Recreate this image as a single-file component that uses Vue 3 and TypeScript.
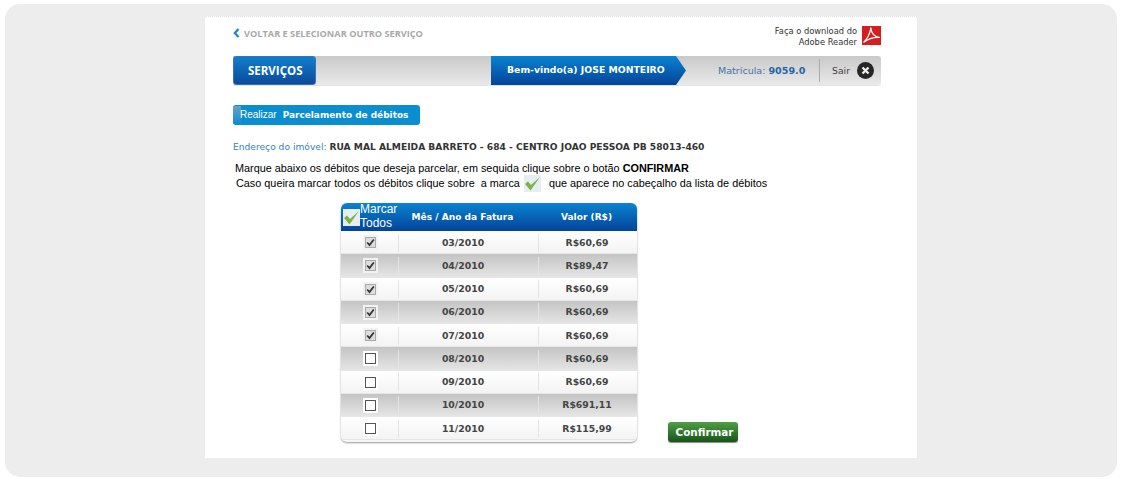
<script setup lang="ts">
interface Row { month: string; value: string; checked: boolean }
const rows: Row[] = [
  { month: '03/2010', value: 'R$60,69', checked: true },
  { month: '04/2010', value: 'R$89,47', checked: true },
  { month: '05/2010', value: 'R$60,69', checked: true },
  { month: '06/2010', value: 'R$60,69', checked: true },
  { month: '07/2010', value: 'R$60,69', checked: true },
  { month: '08/2010', value: 'R$60,69', checked: false },
  { month: '09/2010', value: 'R$60,69', checked: false },
  { month: '10/2010', value: 'R$691,11', checked: false },
  { month: '11/2010', value: 'R$115,99', checked: false },
]
</script>

<template>
  <div class="panel">
    <main class="sheet">
      <div class="top">
        <a class="back">
          <svg width="7" height="10" viewBox="0 0 7 10"><path d="M5.5 1 L1.8 5 L5.5 9" fill="none" stroke="#1a86c4" stroke-width="2.2" /></svg>
          VOLTAR E SELECIONAR OUTRO SERVIÇO
        </a>
        <div class="adobe">
          <span>Faça o download do<br />Adobe Reader</span>
          <svg width="19" height="19" viewBox="0 0 19 19">
            <rect width="19" height="19" fill="#d3201f" />
            <path d="M1.5 16.5 C5 13.5 8.5 7 8.8 1.5 C9.2 7 12.5 11 18 11.5 C12 11 6 13 1.5 16.5 Z" fill="none" stroke="#fff" stroke-width="1.2" />
          </svg>
        </div>
      </div>

      <nav class="bar">
        <div class="services">SERVIÇOS</div>
        <div class="spacer"></div>
        <div class="welcome">Bem-vindo(a) JOSE MONTEIRO</div>
        <div class="reg">Matrícula: <b>9059.0</b></div>
        <div class="exit">
          <span>Sair</span>
          <svg width="17" height="17" viewBox="0 0 17 17">
            <circle cx="8.5" cy="8.5" r="8.5" fill="#262626" />
            <path d="M5.5 5.5 L11.5 11.5 M11.5 5.5 L5.5 11.5" stroke="#eee" stroke-width="2.4" />
          </svg>
        </div>
      </nav>

      <div class="action"><span class="verb">Realizar</span><b>Parcelamento de débitos</b></div>

      <p class="address"><span>Endereço do imóvel:</span> <b>RUA MAL ALMEIDA BARRETO - 684 - CENTRO JOAO PESSOA PB 58013-460</b></p>

      <p class="help first">Marque abaixo os débitos que deseja parcelar, em sequida clique sobre o botão <b>CONFIRMAR</b></p>
      <p class="help second">
        <span>Caso queira marcar todos os débitos clique sobre&nbsp; a marca</span>
        <span class="mark small">
          <svg width="17" height="17" viewBox="0 0 17 17"><path d="M1 9 L6.5 15.5 L16 2 L7 10 L4 6.5 Z" fill="#7cb342" /></svg>
        </span>
        <span>que aparece no cabeçalho da lista de débitos</span>
      </p>

      <div class="list-row">
        <section class="table">
          <header class="head">
            <div class="col-check all">
              <span class="mark">
                <svg width="17" height="17" viewBox="0 0 17 17"><path d="M1 9 L6.5 15.5 L16 2 L7 10 L4 6.5 Z" fill="#7cb342" /></svg>
              </span>
              <span class="all-label">Marcar<br />Todos</span>
            </div>
            <div class="col-month">Mês / Ano da Fatura</div>
            <div class="col-value">Valor (R$)</div>
          </header>
          <div v-for="(r, i) in rows" :key="r.month" class="row" :class="{ dark: i % 2 === 1 }">
            <div class="col-check">
              <span class="box" :class="{ on: r.checked }">
                <svg v-if="r.checked" width="9" height="9" viewBox="0 0 9 9"><path d="M1.2 4.5 L3.5 7 L7.8 1.5" fill="none" stroke="#333" stroke-width="1.8" /></svg>
              </span>
            </div>
            <div class="col-month cell">{{ r.month }}</div>
            <div class="col-value cell">{{ r.value }}</div>
          </div>
        </section>
        <button class="confirm" type="button">Confirmar</button>
      </div>
    </main>
  </div>
</template>

<style>
html, body { margin: 0; background: #fff; }
</style>

<style scoped>
.panel {
  box-sizing: border-box;
  width: 1112px;
  height: 473px;
  margin: 4px 0 0 5px;
  padding: 12px 0 0 200px;
  background: #ededed;
  border-radius: 15px;
  font-family: "DejaVu Sans", sans-serif;
}
.sheet {
  box-sizing: border-box;
  width: 712px;
  height: 442px;
  padding: 0 36px 0 28px;
  background: #fff;
  border-top: 1px dotted #d9e4ea;
}
.top {
  display: flex;
  justify-content: space-between;
  height: 39px;
}
.back {
  display: flex;
  align-items: center;
  gap: 4px;
  height: 14px;
  margin-top: 9px;
  color: #a9a9a9;
  font: bold 9.2px "Open Sans", sans-serif;
  white-space: nowrap;
}
.adobe {
  display: flex;
  gap: 5px;
  margin-top: 9px;
  text-align: right;
  color: #333;
  font-size: 8.3px;
  line-height: 11px;
}
.bar {
  display: flex;
  height: 29px;
  background: linear-gradient(#c9c9c9, #e9e9e9);
  border-radius: 0 3px 3px 0;
  box-shadow: 0 1px 0 #dfe6ea;
}
.services {
  box-sizing: border-box;
  width: 83px;
  padding-left: 14px;
  color: #fff;
  font: bold 11.5px/27px "Open Sans", sans-serif;
  background: linear-gradient(#0f7fcb, #0b4a9c);
  border: 1px solid #3f71b2;
  border-radius: 3px;
}
.spacer { width: 175px; }
.welcome {
  box-sizing: border-box;
  width: 195px;
  padding-left: 16px;
  color: #fff;
  font-size: 9.3px;
  font-weight: bold;
  line-height: 27px;
  background: linear-gradient(#0a83d0, #04439a);
  clip-path: polygon(0 0, 185px 0, 195px 50%, 185px 100%, 0 100%);
}
.reg {
  width: 133px;
  padding-left: 32px;
  box-sizing: border-box;
  color: #3f74ad;
  font-size: 9.55px;
  line-height: 29px;
  white-space: nowrap;
}
.reg b { color: #1e66a8; }
.exit {
  display: flex;
  align-items: center;
  gap: 7px;
  height: 23px;
  margin-top: 3px;
  padding-left: 12px;
  color: #444;
  font-size: 9.3px;
  border-left: 1px solid #aaa;
}
.action {
  display: flex;
  align-items: center;
  gap: 6px;
  box-sizing: border-box;
  width: 187px;
  height: 20px;
  margin: 20px 0 0 0;
  color: #fff;
  font-size: 8.95px;
  background: #0a8ed0;
  border-radius: 3px;
  overflow: hidden;
}
.verb {
  padding: 3px 0 4px 7px;
  font: 10px "Liberation Sans", sans-serif;
  background: linear-gradient(#6aa3c2, #0a8ed0) no-repeat 0 0 / 8px 100%;
}
.address {
  margin: 16px 0 0;
  color: #333;
  font-size: 9.15px;
  line-height: 12px;
  white-space: nowrap;
}
.address span { color: #2f86b8; }
.help {
  margin: 0;
  color: #000;
  font: 10.85px/16px "Liberation Sans", sans-serif;
  white-space: nowrap;
}
.first { margin: 7px 0 0 2px; }
.second {
  display: flex;
  align-items: center;
  gap: 4px;
  margin: -1px 0 0 3px;
  height: 16px;
}
.second .mark { margin-right: 4px; }
.mark {
  display: inline-flex;
  align-items: center;
  justify-content: center;
  flex: none;
  width: 17px;
  height: 17px;
  background: #e6eef3;
}
.list-row {
  display: flex;
  align-items: flex-end;
  margin: 12px 0 0 108px;
}
.table {
  width: 296px;
  padding-bottom: 2px;
  background: #f6f6f6;
  border-radius: 6px;
  box-shadow: 0 1px 2px #999;
  overflow: hidden;
}
.head {
  display: flex;
  align-items: center;
  height: 28px;
  color: #fff;
  font-size: 9.05px;
  font-weight: bold;
  background: linear-gradient(#0a83d0, #04439a);
}
.col-check {
  display: flex;
  align-items: center;
  justify-content: center;
  width: 57px;
  flex: none;
}
.col-month {
  box-sizing: border-box;
  width: 140px;
  padding-right: 11px;
  flex: none;
  text-align: center;
}
.col-value { width: 97px; flex: none; text-align: center; }
.all {
  justify-content: flex-start;
  box-sizing: border-box;
  gap: 0;
  padding-left: 2px;
}
.all-label {
  margin-top: -2px;
  color: #fff;
  font: 12px/14px "Liberation Sans", sans-serif;
}
.row {
  display: flex;
  align-items: center;
  height: 23.25px;
  color: #444;
  font-size: 9.3px;
  font-weight: bold;
  background: linear-gradient(#fff, #f3f3f3);
  box-shadow: inset 0 -1px 0 #e6e6e6;
}
.row.dark { background: linear-gradient(#c4c4c4, #e6e6e6); }
.row .col-check { padding-left: 2px; box-sizing: border-box; }
.cell {
  height: 18px;
  line-height: 17px;
  border-left: 1px solid #e4e4e4;
  box-sizing: border-box;
}
.box {
  box-sizing: border-box;
  display: inline-flex;
  align-items: center;
  justify-content: center;
  width: 11px;
  height: 11px;
  border: 1px solid #555;
  background: #fff;
  box-shadow: 0 0 0 2px #fff;
}
.box.on {
  background: #ddd;
  border-color: #aaa;
  box-shadow: 0 0 0 2px #f2f2f2;
}
.confirm {
  width: 70px;
  height: 20px;
  margin: 0 0 0 31px;
  padding: 0 0 0 3px;
  color: #fff;
  font: bold 10.4px "DejaVu Sans", sans-serif;
  background: linear-gradient(#4f9f45, #17541a);
  border: 0;
  border-radius: 3px;
  box-shadow: 0 1px 1px #888;
}
</style>
